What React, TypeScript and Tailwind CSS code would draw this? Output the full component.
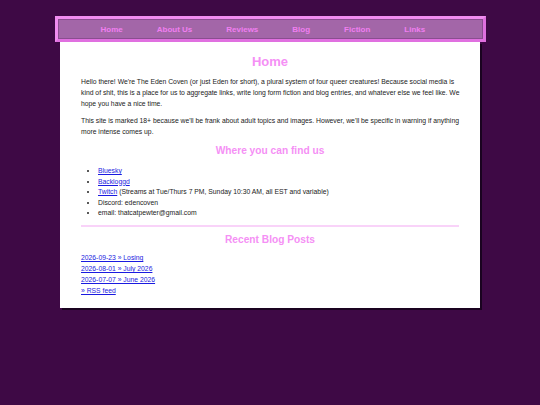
export default function App() {
  const navItems = ["Home", "About Us", "Reviews", "Blog", "Fiction", "Links"];
  const posts = [
    "2026-09-23 » Losing",
    "2026-08-01 » July 2026",
    "2026-07-07 » June 2026",
  ];

  return (
    <div className="min-h-[405px] w-full bg-[#3e0945] pt-[16px] font-['Liberation_Sans',Arial,sans-serif] text-[6.8px] leading-[11px] text-[#222]">
      <div className="mx-auto w-[431px]">
        {/* nav */}
        <nav className="flex h-[26px] items-center border-[3px] border-t-[#f08cf0] border-l-[#f08cf0] border-r-[#e070e0] border-b-[#e070e0] bg-[#a366a8] shadow-[inset_0_0_0_1px_#8a4d90]">
          <ul className="flex w-full items-center pl-[43px] text-[8px] font-bold text-[#f07ef0]">
            {navItems.map((n) => (
              <li key={n} className="mr-[34px]">
                <a href="#">{n}</a>
              </li>
            ))}
          </ul>
        </nav>

        {/* main box */}
        <main className="mx-auto h-[266px] w-[420px] bg-white px-[21px] pt-[8px] shadow-[2px_2px_0_#1a0320]">
          <h1 className="text-center text-[13px] font-bold leading-[24px] text-[#f590f5]">Home</h1>
          <p className="mt-[2px] whitespace-nowrap">
            Hello there! We're The Eden Coven (or just Eden for short), a plural system of four queer creatures! Because social media is
            <br />
            kind of shit, this is a place for us to aggregate links, write long form fiction and blog entries, and whatever else we feel like. We
            <br />
            hope you have a nice time.
          </p>
          <p className="mt-[6px] whitespace-nowrap">
            This site is marked 18+ because we'll be frank about adult topics and images. However, we'll be specific in warning if anything
            <br />
            more intense comes up.
          </p>

          <h2 className="mt-[5px] text-center text-[10.2px] font-bold leading-[18px] text-[#f590f5]">Where you can find us</h2>
          <ul className="mt-[6px] list-disc pl-[17px] leading-[10.6px]">
            <li>
              <a href="#" className="text-[#1a1ae0] underline">Bluesky</a>
            </li>
            <li>
              <a href="#" className="text-[#1a1ae0] underline">Backloggd</a>
            </li>
            <li>
              <a href="#" className="text-[#1a1ae0] underline">Twitch</a> (Streams at Tue/Thurs 7 PM, Sunday 10:30 AM, all EST and variable)
            </li>
            <li>Discord: edencoven</li>
            <li>email: thatcatpewter@gmail.com</li>
          </ul>

          <div className="mt-[6px] h-[2px] bg-[#f9d3f9]" />

          <h2 className="mt-[4px] text-center text-[10.2px] font-bold leading-[18px] text-[#f590f5]">Recent Blog Posts</h2>
          <div className="mt-[3px] flex flex-col leading-[11px]">
            {posts.map((p) => (
              <a key={p} href="#" className="w-fit text-[#1a1ae0] underline">{p}</a>
            ))}
            <a href="#" className="w-fit text-[#1a1ae0] underline">» RSS feed</a>
          </div>
        </main>
      </div>
    </div>
  );
}
